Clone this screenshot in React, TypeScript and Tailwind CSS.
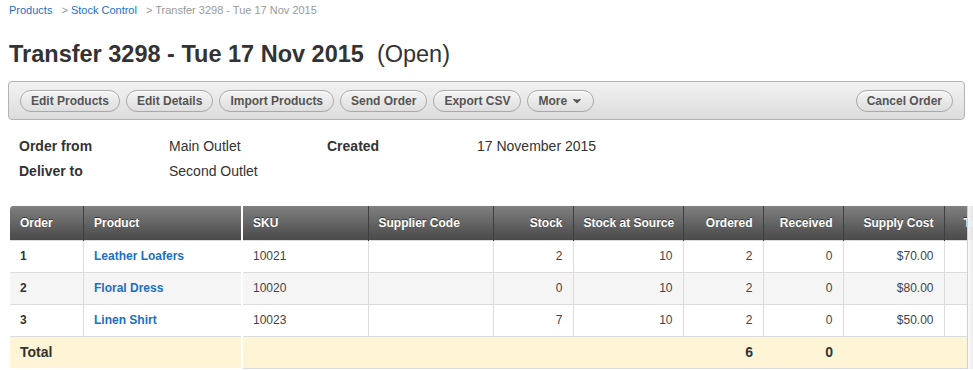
import { ChevronDown } from "lucide-react";

const buttons = ["Edit Products", "Edit Details", "Import Products", "Send Order", "Export CSV"];

const rows = [
  { order: "1", product: "Leather Loafers", sku: "10021", stock: "2", source: "10", ordered: "2", received: "0", cost: "$70.00" },
  { order: "2", product: "Floral Dress", sku: "10020", stock: "0", source: "10", ordered: "2", received: "0", cost: "$80.00" },
  { order: "3", product: "Linen Shirt", sku: "10023", stock: "7", source: "10", ordered: "2", received: "0", cost: "$50.00" },
];

const rightCols = [
  { label: "SKU", w: "w-[125px]", align: "text-left" },
  { label: "Supplier Code", w: "w-[125px]", align: "text-left" },
  { label: "Stock", w: "w-[80px]", align: "text-right" },
  { label: "Stock at Source", w: "w-[110px]", align: "text-right" },
  { label: "Ordered", w: "w-[80px]", align: "text-right" },
  { label: "Received", w: "w-[80px]", align: "text-right" },
  { label: "Supply Cost", w: "w-[101px]", align: "text-right" },
];

const th =
  "h-[34px] border-l border-[#3f3f3f] first:border-l-0 bg-gradient-to-b from-[#808080] to-[#4a4a4a] px-[10px] text-[12px] font-bold text-white [text-shadow:0_-1px_0_rgba(0,0,0,0.5)] whitespace-nowrap";
const td = "h-[32px] border-l border-t border-[#dcdcdc] first:border-l-0 px-[10px] text-[12px] whitespace-nowrap";

function Button({ label, caret }: { label: string; caret?: boolean }) {
  return (
    <button className="flex h-[22px] items-center gap-1 rounded-full border border-[#a9a9a9] bg-gradient-to-b from-[#f4f4f4] to-[#dedede] px-[10px] text-[12px] font-bold text-[#555] shadow-[inset_0_1px_0_#fff]">
      {label}
      {caret && <ChevronDown className="h-3 w-3 fill-[#555] stroke-[3]" />}
    </button>
  );
}

export default function App() {
  return (
    <div className="min-h-[370px] overflow-hidden bg-white font-['Liberation_Sans',Arial,sans-serif] text-[#333]">
      <div className="flex gap-[9px] px-[9px] pt-[3px] text-[11px] leading-[14px]">
        <a className="text-[#1a6fc9]">Products</a>
        <span className="text-[#999]">
          &gt; <a className="text-[#1a6fc9]">Stock Control</a>
        </span>
        <span className="text-[#999]">&gt; Transfer 3298 - Tue 17 Nov 2015</span>
      </div>

      <h1 className="mt-[23px] px-[9px] text-[23.5px] font-bold leading-[28px] text-[#333]">
        Transfer 3298 - Tue 17 Nov 2015
        <span className="ml-[13px] font-normal">(Open)</span>
      </h1>

      <div className="mx-[8px] mt-[13px] flex h-[39px] items-center justify-between rounded-[4px] border border-[#b3b3b3] bg-gradient-to-b from-[#f2f2f2] to-[#dcdcdc] px-[11px]">
        <div className="flex gap-[6px]">
          {buttons.map((b) => (
            <Button key={b} label={b} />
          ))}
          <Button label="More" caret />
        </div>
        <Button label="Cancel Order" />
      </div>

      <div className="mt-[17px] grid grid-cols-[150px_158px_150px_1fr] gap-y-[7px] px-[19px] text-[14px] leading-[18px]">
        <div className="font-bold">Order from</div>
        <div>Main Outlet</div>
        <div className="font-bold">Created</div>
        <div>17 November 2015</div>
        <div className="font-bold">Deliver to</div>
        <div>Second Outlet</div>
      </div>

      <div className="mt-[26px] ml-[9px] flex gap-[2px]">
        <table className="w-[232px] table-fixed border-collapse overflow-hidden rounded-tl-[4px] border-b border-l border-[#dcdcdc]">
          <thead>
            <tr>
              <th className={`${th} w-[74px] text-left`}>Order</th>
              <th className={`${th} text-left`}>Product</th>
            </tr>
          </thead>
          <tbody>
            {rows.map((r, i) => (
              <tr key={r.order} className={i === 1 ? "bg-[#f5f5f5]" : "bg-white"}>
                <td className={`${td} font-bold text-[#333]`}>{r.order}</td>
                <td className={`${td} font-bold text-[#1a6fc9]`}>{r.product}</td>
              </tr>
            ))}
            <tr className="bg-[#fef5d6]">
              <td colSpan={2} className={`${td} text-[14px] font-bold text-[#333]`}>
                Total
              </td>
            </tr>
          </tbody>
        </table>

        <div className="relative flex-1 overflow-hidden">
          <table className="w-[801px] table-fixed border-collapse border-b border-[#dcdcdc]">
            <thead>
              <tr>
                {rightCols.map((c) => (
                  <th key={c.label} className={`${th} ${c.w} ${c.align}`}>
                    {c.label}
                  </th>
                ))}
                <th className={`${th} w-[100px] pl-[19px] text-left`}>Total</th>
              </tr>
            </thead>
            <tbody className="text-[#444]">
              {rows.map((r, i) => (
                <tr key={r.order} className={i === 1 ? "bg-[#f5f5f5]" : "bg-white"}>
                  <td className={td}>{r.sku}</td>
                  <td className={td}></td>
                  <td className={`${td} text-right`}>{r.stock}</td>
                  <td className={`${td} text-right`}>{r.source}</td>
                  <td className={`${td} text-right`}>{r.ordered}</td>
                  <td className={`${td} text-right`}>{r.received}</td>
                  <td className={`${td} text-right`}>{r.cost}</td>
                  <td className={td}></td>
                </tr>
              ))}
              <tr className="bg-[#fef5d6] text-[#333]">
                <td colSpan={4} className="h-[32px] border-t border-[#dcdcdc]"></td>
                <td className="h-[32px] border-t border-[#dcdcdc] px-[10px] text-right text-[14px] font-bold">6</td>
                <td className="h-[32px] border-t border-[#dcdcdc] px-[10px] text-right text-[14px] font-bold">0</td>
                <td colSpan={2} className="h-[32px] border-t border-[#dcdcdc]"></td>
              </tr>
            </tbody>
          </table>
          <div className="pointer-events-none absolute inset-y-0 right-0 w-[6px] border-l border-[#cfcfcf] bg-gradient-to-r from-[rgba(250,250,250,0.95)] to-[rgba(235,235,235,0.95)]" />
        </div>
      </div>
    </div>
  );
}
